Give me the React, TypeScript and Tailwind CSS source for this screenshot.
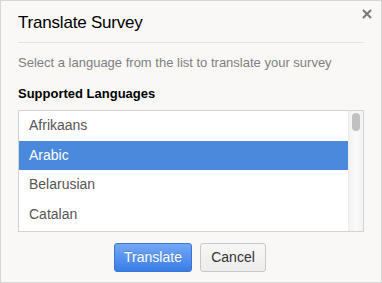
import React from "react";

export default function App() {
  const langs = ["Afrikaans", "Arabic", "Belarusian", "Catalan"];
  return (
    <div
      className="relative w-[382px] h-[283px] bg-[#f9f8f7] border border-[#d6d6d6] box-border"
      style={{ fontFamily: '"Liberation Sans", Arial, sans-serif' }}
    >
      <button className="absolute right-[8px] top-[7px] w-[12px] h-[12px] flex items-center justify-center">
        <svg width="10" height="10" viewBox="0 0 10 10">
          <path d="M1 1L9 9M9 1L1 9" stroke="#777" strokeWidth="2" strokeLinecap="butt" />
        </svg>
      </button>
      <div className="px-[17px]">
        <div className="pt-[11px] h-[42px] border-b border-[#e4e3e2] text-[17px] leading-[22px] text-black tracking-[-0.2px]">
          Translate Survey
        </div>
        <div className="mt-[12px] text-[13px] leading-[16px] text-[#7f7f7f]">
          Select a language from the list to translate your survey
        </div>
        <div className="mt-[15px] text-[13px] leading-[16px] font-bold text-black">
          Supported Languages
        </div>
        <div className="mt-[8px] flex h-[122px] w-[346px] border border-[#d3d3d3] bg-white overflow-hidden">
          <div className="flex-1 flex flex-col">
            {langs.map((l) => (
              <div
                key={l}
                className={
                  "h-[29.5px] shrink-0 flex items-center pl-[10px] text-[14px] " +
                  (l === "Arabic" ? "bg-[#4a89dc] text-white" : "text-[#555]")
                }
              >
                {l}
              </div>
            ))}
          </div>
          <div className="w-[15px] h-full bg-gradient-to-r from-[#f1f1f1] via-[#fafafa] to-[#f3f3f3] border-l border-[#ececec] relative">
            <div className="absolute left-[3px] top-[2px] w-[8px] h-[18px] rounded-full bg-[#c1c1c1]" />
          </div>
        </div>
        <div className="mt-[11px] flex justify-center gap-[8px] pr-[2px]">
          <button className="w-[78px] h-[29px] rounded-[3px] border border-[#3a75cf] bg-gradient-to-b from-[#72a8f6] to-[#3b7de6] text-white text-[14px] [text-shadow:0_-1px_0_rgba(0,0,0,0.15)]">
            Translate
          </button>
          <button className="w-[66px] h-[29px] rounded-[3px] border border-[#c8c8c8] bg-gradient-to-b from-[#f7f7f7] to-[#ececec] text-[#333] text-[14px]">
            Cancel
          </button>
        </div>
      </div>
    </div>
  );
}
